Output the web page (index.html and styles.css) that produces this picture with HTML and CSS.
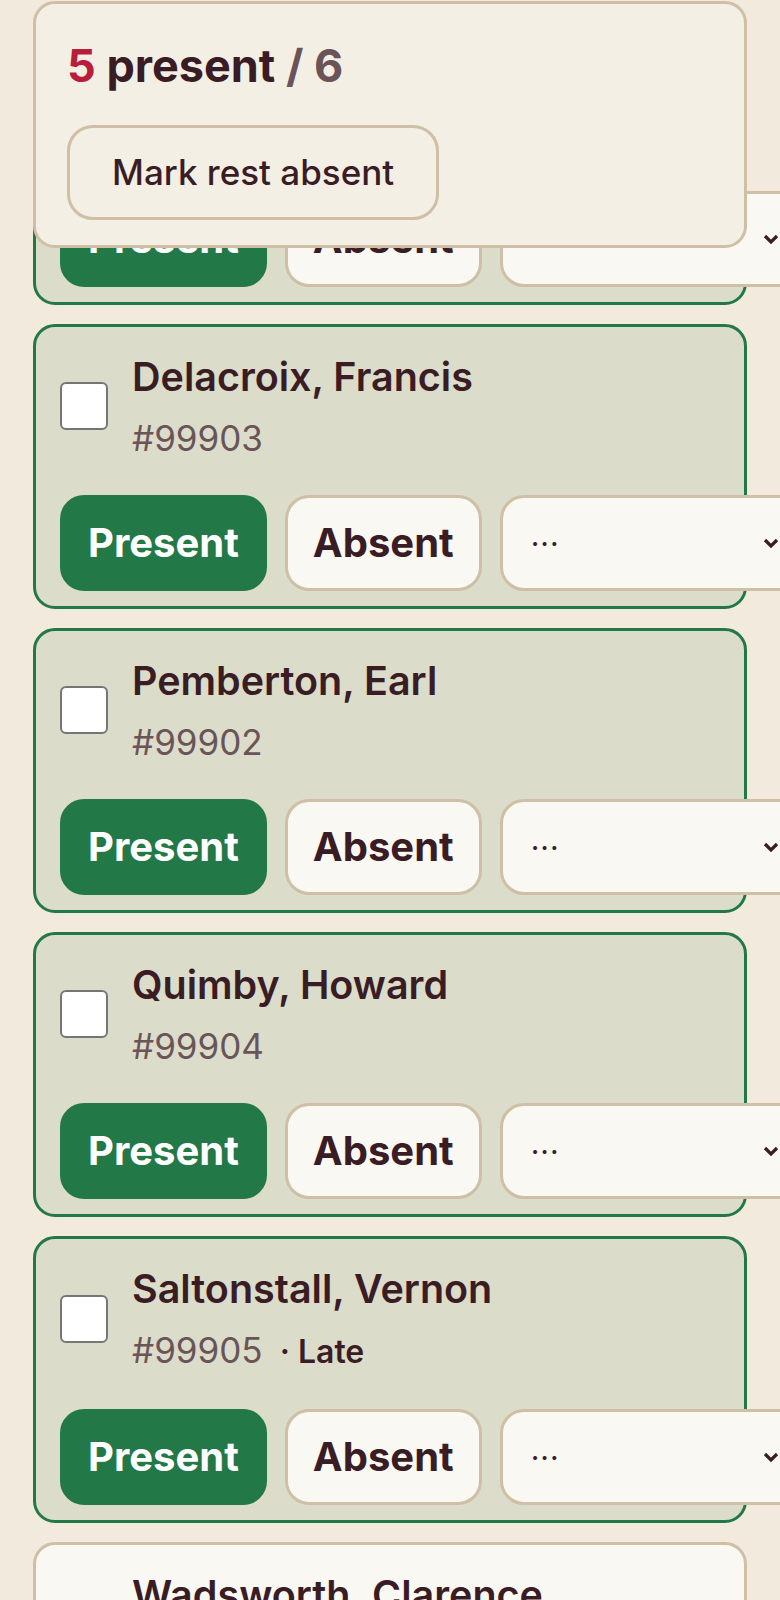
FILE: index.html
```html
<!DOCTYPE html>
<html lang="en">
<head>
  <meta charset="UTF-8">
  <meta name="viewport" content="width=device-width, initial-scale=1.0">
  <title>Roll Call</title>
  <link rel="stylesheet" href="styles.css">
</head>
<body>
  <div class="summary">
    <h2 class="count"><span class="num">5</span> present <span class="total">/ 6</span></h2>
    <button class="rest-btn">Mark rest absent</button>
  </div>

  <div class="roster">
    <div class="card marked">
      <div class="card-head">
        <span class="check"></span>
        <div class="info">
          <div class="name">Ashworth, Bernard</div>
          <div class="id">#99901</div>
        </div>
      </div>
      <div class="actions">
        <button class="btn present">Present</button>
        <button class="btn">Absent</button>
        <div class="more"><span class="dots">···</span><svg width="16" height="11" viewBox="0 0 16 11"><path d="M2 2l6 6 6-6" fill="none" stroke="#3a1d24" stroke-width="3.2"/></svg></div>
      </div>
    </div>

    <div class="card marked">
      <div class="card-head">
        <span class="check"></span>
        <div class="info">
          <div class="name">Delacroix, Francis</div>
          <div class="id">#99903</div>
        </div>
      </div>
      <div class="actions">
        <button class="btn present">Present</button>
        <button class="btn">Absent</button>
        <div class="more"><span class="dots">···</span><svg width="16" height="11" viewBox="0 0 16 11"><path d="M2 2l6 6 6-6" fill="none" stroke="#3a1d24" stroke-width="3.2"/></svg></div>
      </div>
    </div>

    <div class="card marked">
      <div class="card-head">
        <span class="check"></span>
        <div class="info">
          <div class="name">Pemberton, Earl</div>
          <div class="id">#99902</div>
        </div>
      </div>
      <div class="actions">
        <button class="btn present">Present</button>
        <button class="btn">Absent</button>
        <div class="more"><span class="dots">···</span><svg width="16" height="11" viewBox="0 0 16 11"><path d="M2 2l6 6 6-6" fill="none" stroke="#3a1d24" stroke-width="3.2"/></svg></div>
      </div>
    </div>

    <div class="card marked">
      <div class="card-head">
        <span class="check"></span>
        <div class="info">
          <div class="name">Quimby, Howard</div>
          <div class="id">#99904</div>
        </div>
      </div>
      <div class="actions">
        <button class="btn present">Present</button>
        <button class="btn">Absent</button>
        <div class="more"><span class="dots">···</span><svg width="16" height="11" viewBox="0 0 16 11"><path d="M2 2l6 6 6-6" fill="none" stroke="#3a1d24" stroke-width="3.2"/></svg></div>
      </div>
    </div>

    <div class="card marked">
      <div class="card-head">
        <span class="check"></span>
        <div class="info">
          <div class="name">Saltonstall, Vernon</div>
          <div class="id">#99905<span class="note">· Late</span></div>
        </div>
      </div>
      <div class="actions">
        <button class="btn present">Present</button>
        <button class="btn">Absent</button>
        <div class="more"><span class="dots">···</span><svg width="16" height="11" viewBox="0 0 16 11"><path d="M2 2l6 6 6-6" fill="none" stroke="#3a1d24" stroke-width="3.2"/></svg></div>
      </div>
    </div>

    <div class="card">
      <div class="card-head">
        <span class="check"></span>
        <div class="info">
          <div class="name">Wadsworth, Clarence</div>
          <div class="id">#99906</div>
        </div>
      </div>
      <div class="actions">
        <button class="btn">Present</button>
        <button class="btn">Absent</button>
        <div class="more"><span class="dots">···</span><svg width="16" height="11" viewBox="0 0 16 11"><path d="M2 2l6 6 6-6" fill="none" stroke="#3a1d24" stroke-width="3.2"/></svg></div>
      </div>
    </div>
  </div>
</body>
</html>
```

FILE: styles.css
```css
html {
  overflow-x: hidden;
}
body {
  margin: 0;
  padding: 20px 33px 40px;
  background-color: #f2eadd;
  color: #3a1d24;
  font-family: Inter, "Noto Sans", sans-serif;
}
.summary {
  position: fixed;
  top: 1px;
  left: 33px;
  right: 33px;
  z-index: 2;
  background: #f4efe5;
  border: 3px solid #cfbfa4;
  border-radius: 22px;
  padding: 34px 31px 25px;
}
.count {
  margin: 0 0 31px;
  font-size: 45px;
  line-height: 56px;
  font-weight: 700;
}
.count .num {
  color: #b81d3a;
}
.count .total {
  color: #6b5458;
}
.rest-btn {
  font-family: inherit;
  font-size: 35px;
  line-height: 41px;
  font-weight: 500;
  color: #3a1d24;
  background: #f4efe5;
  border: 3px solid #cfbfa4;
  border-radius: 26px;
  padding: 24px 42px;
}
.roster {
  display: flex;
  flex-direction: column;
  gap: 19px;
}
.card {
  background: #faf8f3;
  border: 3px solid #cfbfa4;
  border-radius: 22px;
  padding: 26px 24px 15px;
}
.card.marked {
  background: #dbdcca;
  border-color: #237848;
}
.card-head {
  display: flex;
  align-items: center;
  gap: 24px;
}
.check {
  flex: none;
  width: 44px;
  height: 44px;
  background: #fff;
  border: 2px solid #767676;
  border-radius: 6px;
}
.name {
  font-size: 39.5px;
  line-height: 48px;
  font-weight: 600;
}
.id {
  margin-top: 16px;
  font-size: 35px;
  line-height: 42px;
  color: #6b5458;
}
.note {
  font-size: 32px;
  font-weight: 600;
  color: #3a1d24;
  margin-left: 17px;
}
.actions {
  display: flex;
  gap: 18px;
  margin-top: 36px;
}
.btn {
  flex: none;
  font-family: inherit;
  font-size: 40px;
  line-height: 48px;
  font-weight: 700;
  color: #3a1d24;
  background: #faf8f3;
  border: 3px solid #cfbfa4;
  border-radius: 24px;
  padding: 21px 25px;
}
.btn.present {
  background: #237848;
  border-color: #237848;
  color: #fff;
}
.more {
  flex: none;
  width: 302px;
  box-sizing: border-box;
  display: flex;
  align-items: center;
  justify-content: space-between;
  background: #faf8f3;
  border: 3px solid #cfbfa4;
  border-radius: 24px;
  padding: 0 20px 0 28px;
}
.dots {
  font-size: 30px;
  letter-spacing: 1px;
}
```
